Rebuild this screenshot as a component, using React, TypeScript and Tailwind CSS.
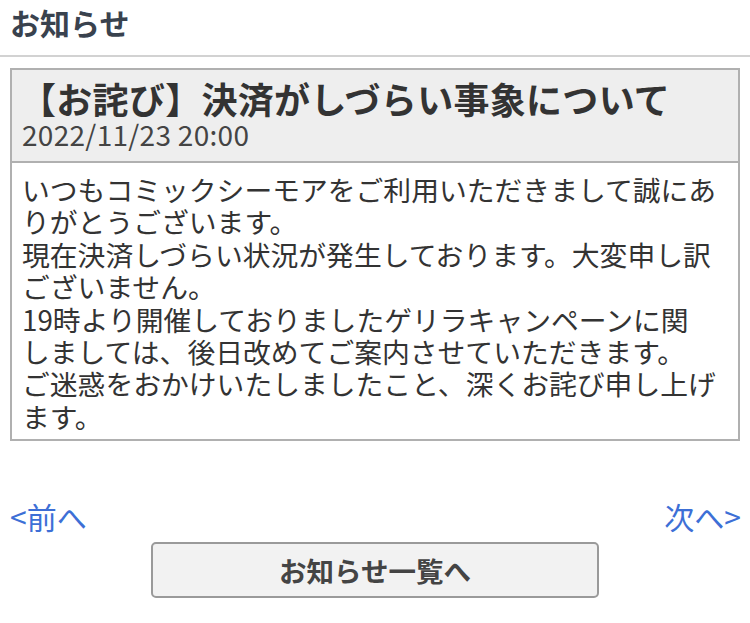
const font = "font-['Hiragino_Sans','Noto_Sans_CJK_JP',sans-serif]";

const lines = [
  "いつもコミックシーモアをご利用いただきまして誠にあ",
  "りがとうございます。",
  "現在決済しづらい状況が発生しております。大変申し訳",
  "ございません。",
  "19時より開催しておりましたゲリラキャンペーンに関",
  "しましては、後日改めてご案内させていただきます。",
  "ご迷惑をおかけいたしましたこと、深くお詫び申し上げ",
  "ます。",
];

export default function App() {
  return (
    <div className={`w-[750px] h-[623px] bg-white overflow-hidden ${font}`}>
      {/* Page title */}
      <div className="h-[57px] px-[10px] border-b-2 border-[#d2d2d2]">
        <h1 className="text-[30px] leading-[44px] font-bold text-[#39424e]">お知らせ</h1>
      </div>

      {/* Notice card */}
      <div className="mx-[10px] mt-[11px] border-2 border-[#b0b0b0]">
        <div className="bg-[#eeeeee] px-[10px] pt-[8px] pb-[11px] border-b-2 border-[#b0b0b0]">
          <h2 className="text-[36px] leading-[40px] font-bold text-[#333333] tracking-[0.3px] -ml-[2px]">
            【お詫び】決済がしづらい事象について
          </h2>
          <p className="text-[28px] leading-[32px] text-[#444444] tracking-[0.3px]">2022/11/23 20:00</p>
        </div>
        <div className="px-[10px] pt-[10px] pb-[7px] text-[27.8px] leading-[32.4px] text-[#333333]">
          {lines.map((l) => (
            <div key={l} className="whitespace-nowrap">
              {l}
            </div>
          ))}
        </div>
      </div>

      {/* Prev / next */}
      <div className="mt-[59px] px-[10px] flex justify-between text-[30px] leading-[32px] text-[#3d6fd6]">
        <a href="#">&lt;前へ</a>
        <a href="#" className="-mr-[1px]">次へ&gt;</a>
      </div>

      <div className="mt-[10px] flex justify-center">
        <button className="w-[448px] h-[56px] bg-[#f2f2f2] border-2 border-[#9a9a9a] rounded-[5px] text-[27.5px] font-bold text-[#444444]">
          お知らせ一覧へ
        </button>
      </div>
    </div>
  );
}
